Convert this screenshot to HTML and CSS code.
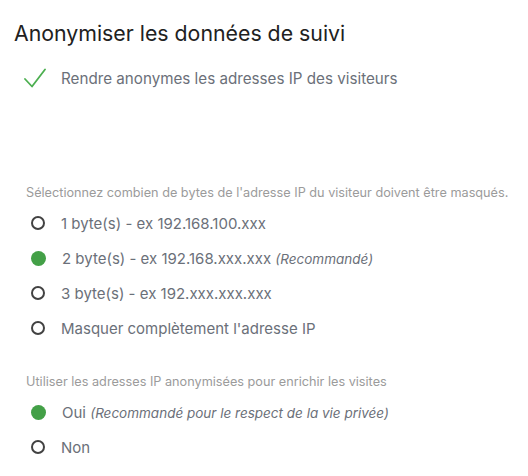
FILE: index.html
```html
<!DOCTYPE html>
<html lang="fr">
<head>
<meta charset="utf-8">
<link rel="stylesheet" href="styles.css">
</head>
<body>
<div class="page">
  <h2 class="title">Anonymiser les données de suivi</h2>
  <div class="check-row">
    <svg class="check" width="22" height="20" viewBox="0 0 22 20"><polyline points="1,11 8,18.5 21,1.5" fill="none" stroke="#4caf50" stroke-width="1.8" stroke-linecap="round" stroke-linejoin="round"/></svg>
    <span class="check-label">Rendre anonymes les adresses IP des visiteurs</span>
  </div>

  <div class="field first">
    <div class="field-label">Sélectionnez combien de bytes de l'adresse IP du visiteur doivent être masqués.</div>
    <div class="radios">
      <div class="radio"><span class="dot"></span><span class="rlabel">1 byte(s) - ex 192.168.100.xxx</span></div>
      <div class="radio"><span class="dot on"></span><span class="rlabel">2 byte(s) - ex 192.168.xxx.xxx <em>(Recommandé)</em></span></div>
      <div class="radio"><span class="dot"></span><span class="rlabel">3 byte(s) - ex 192.xxx.xxx.xxx</span></div>
      <div class="radio"><span class="dot"></span><span class="rlabel">Masquer complètement l'adresse IP</span></div>
    </div>
  </div>

  <div class="field second">
    <div class="field-label">Utiliser les adresses IP anonymisées pour enrichir les visites</div>
    <div class="radios">
      <div class="radio"><span class="dot on"></span><span class="rlabel">Oui <em>(Recommandé pour le respect de la vie privée)</em></span></div>
      <div class="radio"><span class="dot"></span><span class="rlabel">Non</span></div>
    </div>
  </div>
</div>
</body>
</html>
```

FILE: styles.css
```css
html, body {
  margin: 0;
  padding: 0;
  background: #ffffff;
}
body {
  font-family: Inter, "Liberation Sans", Arial, sans-serif;
}
.page {
  padding: 19px 14px 0 14px;
}
.title {
  margin: 0;
  font-size: 21.3px;
  font-weight: 400;
  line-height: 28px;
  color: #212121;
}
.check-row {
  display: flex;
  align-items: center;
  margin-top: 19px;
  padding-left: 10px;
  height: 24px;
}
.check {
  display: block;
  margin-right: 15px;
}
.check-label {
  font-size: 15.2px;
  color: #6b7079;
}
.field {
  padding-left: 12px;
}
.field.first {
  margin-top: 94px;
}
.field.second {
  margin-top: 33px;
}
.field-label {
  font-size: 12.7px;
  line-height: 18px;
  color: #9b9b9b;
}
.radios {
  display: flex;
  flex-direction: column;
  margin-top: 9px;
  gap: 11px;
}
.radio {
  display: flex;
  align-items: center;
  height: 24px;
}
.dot {
  box-sizing: border-box;
  width: 14px;
  height: 14px;
  border-radius: 50%;
  border: 2px solid #424242;
  margin-left: 5px;
  margin-right: 16px;
}
.dot.on {
  border: none;
  background: #43a047;
  width: 15px;
  height: 15px;
}
.rlabel {
  font-size: 15px;
  color: #6b7079;
}
.rlabel em {
  font-size: 13.5px;
  font-style: italic;
}
```
